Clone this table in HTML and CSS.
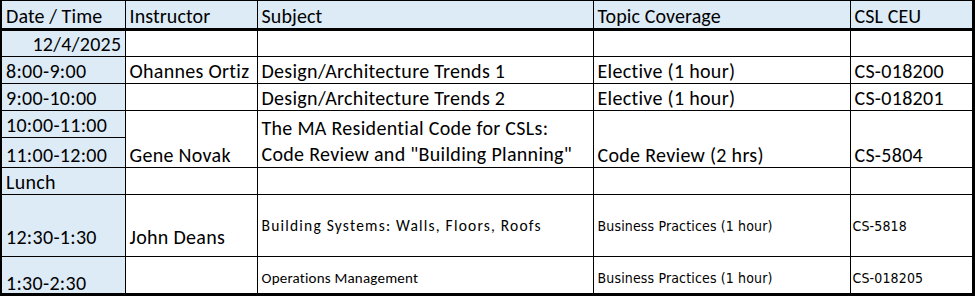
FILE: index.html
```html
<!DOCTYPE html>
<html lang="en">
<head>
<meta charset="utf-8">
<title>Schedule</title>
<link rel="stylesheet" href="styles.css">
</head>
<body>
<table class="sched">
  <colgroup>
    <col class="c-date"><col class="c-inst"><col class="c-subj"><col class="c-topic"><col class="c-ceu">
  </colgroup>
  <thead>
    <tr class="r-head">
      <th class="time">Date / Time</th>
      <th>Instructor</th>
      <th>Subject</th>
      <th>Topic Coverage</th>
      <th>CSL CEU</th>
    </tr>
  </thead>
  <tbody>
    <tr class="r-std">
      <td class="time date">12/4/2025</td><td></td><td></td><td></td><td></td>
    </tr>
    <tr class="r-std">
      <td class="time">8:00-9:00</td><td>Ohannes Ortiz</td><td>Design/Architecture Trends 1</td><td>Elective (1 hour)</td><td>CS-018200</td>
    </tr>
    <tr class="r-std">
      <td class="time">9:00-10:00</td><td></td><td>Design/Architecture Trends 2</td><td>Elective (1 hour)</td><td>CS-018201</td>
    </tr>
    <tr class="r-std">
      <td class="time">10:00-11:00</td>
      <td rowspan="2">Gene Novak</td>
      <td rowspan="2" class="two-line">The MA Residential Code for CSLs:<br>Code Review and "Building Planning"</td>
      <td rowspan="2">Code Review (2 hrs)</td>
      <td rowspan="2">CS-5804</td>
    </tr>
    <tr class="r-tall">
      <td class="time">11:00-12:00</td>
    </tr>
    <tr class="r-std">
      <td class="time">Lunch</td><td></td><td></td><td></td><td></td>
    </tr>
    <tr class="r-big">
      <td class="time">12:30-1:30</td><td>John Deans</td>
      <td class="small wide">Building Systems: Walls, Floors, Roofs</td>
      <td class="small sans">Business Practices (1 hour)</td>
      <td class="small sans ceu">CS-5818</td>
    </tr>
    <tr class="r-last">
      <td class="time">1:30-2:30</td><td></td>
      <td class="small">Operations Management</td>
      <td class="small sans">Business Practices (1 hour)</td>
      <td class="small sans ceu">CS-018205</td>
    </tr>
  </tbody>
</table>
</body>
</html>
```

FILE: styles.css
```css
html, body {
  margin: 0;
  padding: 0;
  background: #ffffff;
}

.sched {
  border-collapse: collapse;
  table-layout: fixed;
  width: 972px;
  font-family: Carlito, "Open Sans", "Liberation Sans", sans-serif;
  font-size: 20px;
  letter-spacing: 0.3px;
  color: #000000;
  border-top: 1px solid #000;
  border-left: 2px solid #000;
  border-right: 3px solid #000;
  border-bottom: 3px solid #000;
}

.c-date { width: 124px; }
.c-inst { width: 132px; }
.c-subj { width: 336px; }
.c-topic { width: 257px; }
.c-ceu { width: 123px; }

.sched th,
.sched td {
  border: 1px solid #000;
  padding: 0 4px;
  text-align: left;
  font-weight: normal;
  vertical-align: bottom;
  line-height: 24px;
  white-space: nowrap;
  overflow: hidden;
}

.sched thead th {
  background: #ddebf7;
  border-bottom: 3px solid #000;
  letter-spacing: 0.1px;
}

.sched .time {
  background: #ddebf7;
}

.sched .date {
  text-align: right;
  padding-right: 3px;
}

.sched td.two-line {
  line-height: 26px;
}

.r-head { height: 29px; }
.r-std { height: 27px; }
.r-tall { height: 30px; }
.r-big { height: 62px; }
.r-last { height: 38px; }

.r-big td { padding-bottom: 7px; }
.r-last td { padding-bottom: 0; line-height: 20px; }

.sched td.small {
  font-size: 15px;
  letter-spacing: 0.2px;
  vertical-align: middle;
  padding-bottom: 0;
  line-height: 18px;
}

.sched td.small.wide {
  font-size: 15.5px;
  letter-spacing: 1.2px;
}

.sched td.small.sans {
  font-family: "DejaVu Sans Condensed", "DejaVu Sans", sans-serif;
  font-stretch: condensed;
  font-size: 14px;
  letter-spacing: 0.15px;
}

.sched td.small.ceu {
  padding-left: 2px;
}

.r-big td.small { padding-top: 0; }
.r-last td.small { padding-top: 5px; }
```
